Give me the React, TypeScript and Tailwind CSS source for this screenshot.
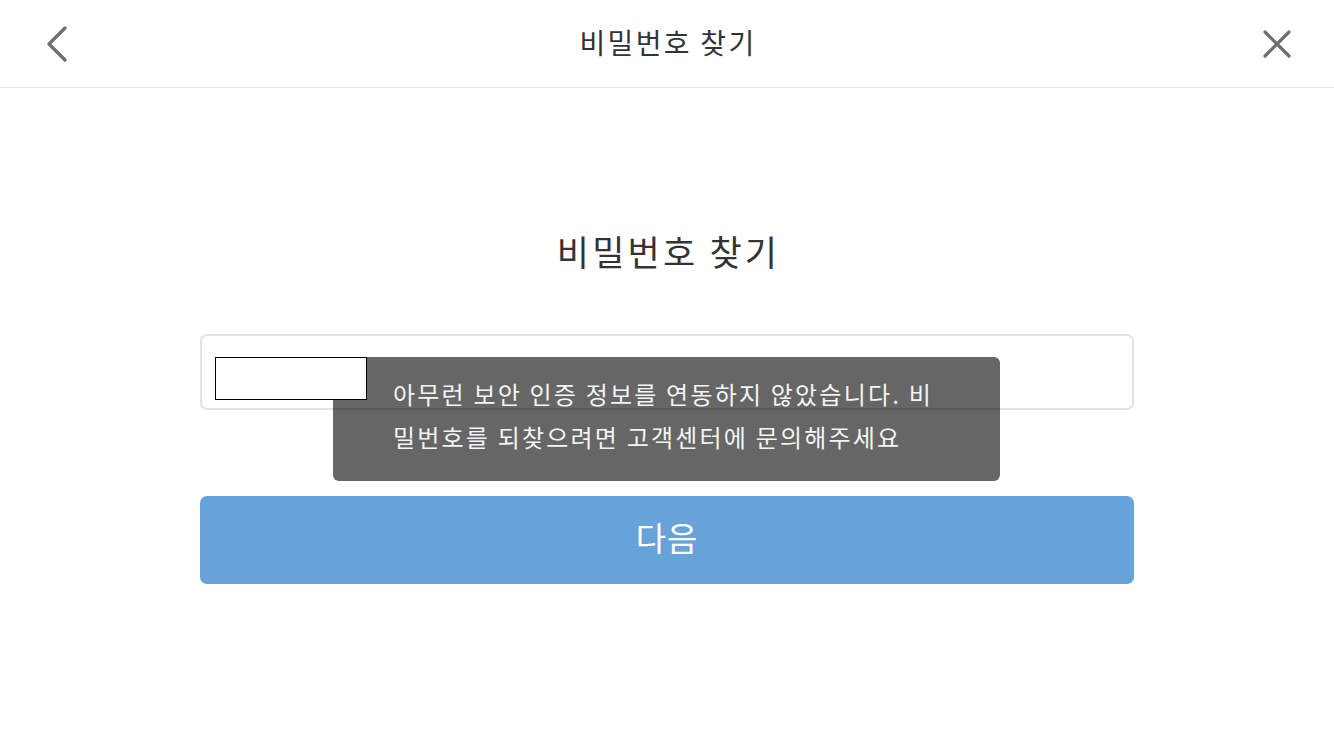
import React from "react";

const FONT = { fontFamily: '"Noto Sans CJK KR", "Noto Sans", sans-serif' };

export default function App() {
  return (
    <div className="w-[1334px] h-[750px] bg-white relative overflow-hidden" style={FONT}>
      <header className="h-[88px] border-b border-[#e6e6e6] grid grid-cols-[1fr_auto_1fr] items-center px-[44px]">
        <button className="w-[26px] h-[40px] flex items-center justify-center justify-self-start">
          <svg width="24" height="36" viewBox="0 0 24 36" fill="none">
            <path d="M20 2 L4 18 L20 34" stroke="#6e6e6e" strokeWidth="3.2" strokeLinecap="round" strokeLinejoin="round" />
          </svg>
        </button>
        <h1 className="text-[28px] leading-none tracking-[2.3px] text-[#333] mb-[3px] pl-[2px]">비밀번호 찾기</h1>
        <button className="w-[28px] h-[28px] flex items-center justify-center justify-self-end mr-[-1px]">
          <svg width="28" height="28" viewBox="0 0 28 28" fill="none">
            <path d="M2 2 L26 26 M26 2 L2 26" stroke="#6e6e6e" strokeWidth="3.2" strokeLinecap="round" />
          </svg>
        </button>
      </header>

      <main className="flex flex-col items-center">
        <h2 className="mt-[142px] text-[35px] leading-[42px] tracking-[3.2px] text-[#333] pl-[3px]">비밀번호 찾기</h2>

        <div className="mt-[62px] w-[934px] relative">
          <div className="h-[76px] border-2 border-[#e3e3e3] rounded-[7px] bg-white" />

          <div className="mt-[86px] h-[88px] rounded-[7px] bg-[#65a3d8] flex items-center justify-center pb-[6px]">
            <span className="text-white text-[33px] leading-none tracking-[1px]">다음</span>
          </div>

          <div className="absolute left-[133px] top-[23px] w-[667px] h-[124px] rounded-[6px] bg-black/60 pl-[60px] pt-[15px]">
            <p className="text-[#f4f4f4] text-[24px] leading-[43px] tracking-[2.2px]">
              아무런 보안 인증 정보를 연동하지 않았습니다. 비
              <br />
              밀번호를 되찾으려면 고객센터에 문의해주세요
            </p>
          </div>

          <div className="absolute left-[15px] top-[23px] w-[152px] h-[43px] border border-black bg-white" />
        </div>
      </main>
    </div>
  );
}
